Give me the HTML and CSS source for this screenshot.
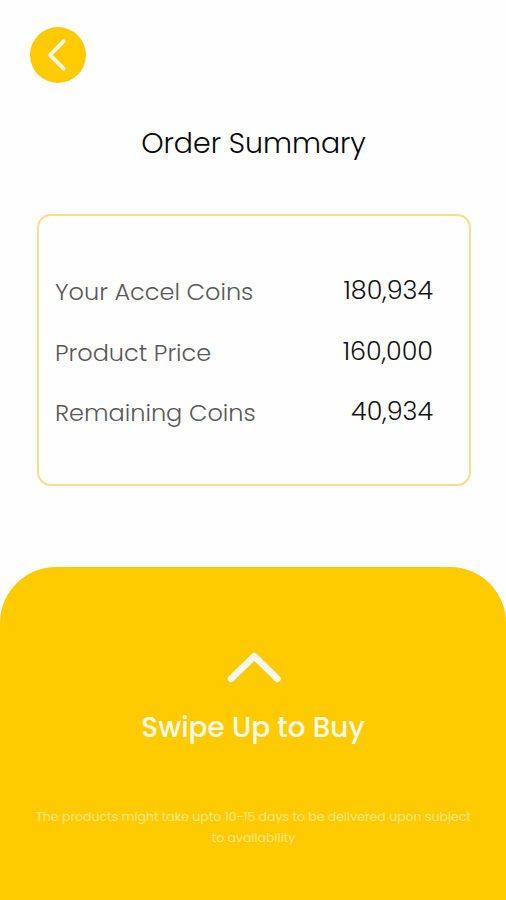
FILE: index.html
```html
<!DOCTYPE html>
<html lang="en">
<head>
<meta charset="utf-8">
<title>Order Summary</title>
<link rel="stylesheet" href="styles.css">
</head>
<body>
<main class="screen">
  <button class="back" aria-label="Back">
    <svg width="56" height="56" viewBox="0 0 56 56"><path d="M33.7 14.2 20 28.2 33.7 41.7" fill="none" stroke="#fff8ea" stroke-width="3.8" stroke-linecap="round" stroke-linejoin="round"/></svg>
  </button>
  <h1 class="title">Order Summary</h1>
  <section class="card">
    <div class="row"><span class="label">Your Accel Coins</span><span class="value">180,934</span></div>
    <div class="row"><span class="label">Product Price</span><span class="value">160,000</span></div>
    <div class="row"><span class="label">Remaining Coins</span><span class="value">40,934</span></div>
  </section>
  <section class="sheet">
    <svg class="chevron" width="56" height="34" viewBox="0 0 56 34"><path d="M5 28.8 28.3 6.2 51.5 28.8" fill="none" stroke="#f7f6f4" stroke-width="6.6" stroke-linecap="round" stroke-linejoin="round"/></svg>
    <h2 class="swipe">Swipe Up to Buy</h2>
    <p class="note">The products might take upto 10-15 days to be delivered upon subject<br>to availability</p>
  </section>
</main>
</body>
</html>
```
FILE: styles.css
```css
* { box-sizing: border-box; margin: 0; padding: 0; }
body {
  background: #fefefe;
  font-family: Poppins, Inter, "Liberation Sans", sans-serif;
}
.screen {
  width: 506px;
  height: 900px;
  display: flex;
  flex-direction: column;
  overflow: hidden;
}
.back {
  width: 56px;
  height: 56px;
  margin: 27px 0 0 30px;
  border: 0;
  border-radius: 50%;
  background: #fecb03;
}
.back svg { display: block; }
.title {
  margin-top: 40px;
  height: 40px;
  line-height: 40px;
  padding-left: 1px;
  text-align: center;
  font-size: 28.4px;
  font-weight: 300;
  color: #080808;
}
.card {
  width: 434px;
  height: 272px;
  margin: 51px 0 0 37px;
  padding: 46px 36px 0 16px;
  border: 2px solid #fddc88;
  border-radius: 14px;
}
.row {
  display: flex;
  justify-content: space-between;
  height: 60.5px;
  line-height: 60px;
}
.label {
  font-size: 24px;
  font-weight: 300;
  color: #585858;
}
.value {
  margin-top: -2px;
  font-size: 25.4px;
  font-weight: 300;
  color: #111;
}
.sheet {
  flex: 1;
  margin-top: 81px;
  border-radius: 56px 56px 0 0;
  background: #fecb00;
  text-align: center;
}
.chevron {
  display: block;
  margin: 83px 0 0 226px;
}
.swipe {
  margin-top: 24px;
  height: 40px;
  line-height: 40px;
  font-size: 27.9px;
  font-weight: 500;
  color: #fffbea;
}
.note {
  margin-top: 58px;
  padding-left: 1px;
  font-size: 12.5px;
  line-height: 21px;
  white-space: nowrap;
  color: #ffe584;
}
```
